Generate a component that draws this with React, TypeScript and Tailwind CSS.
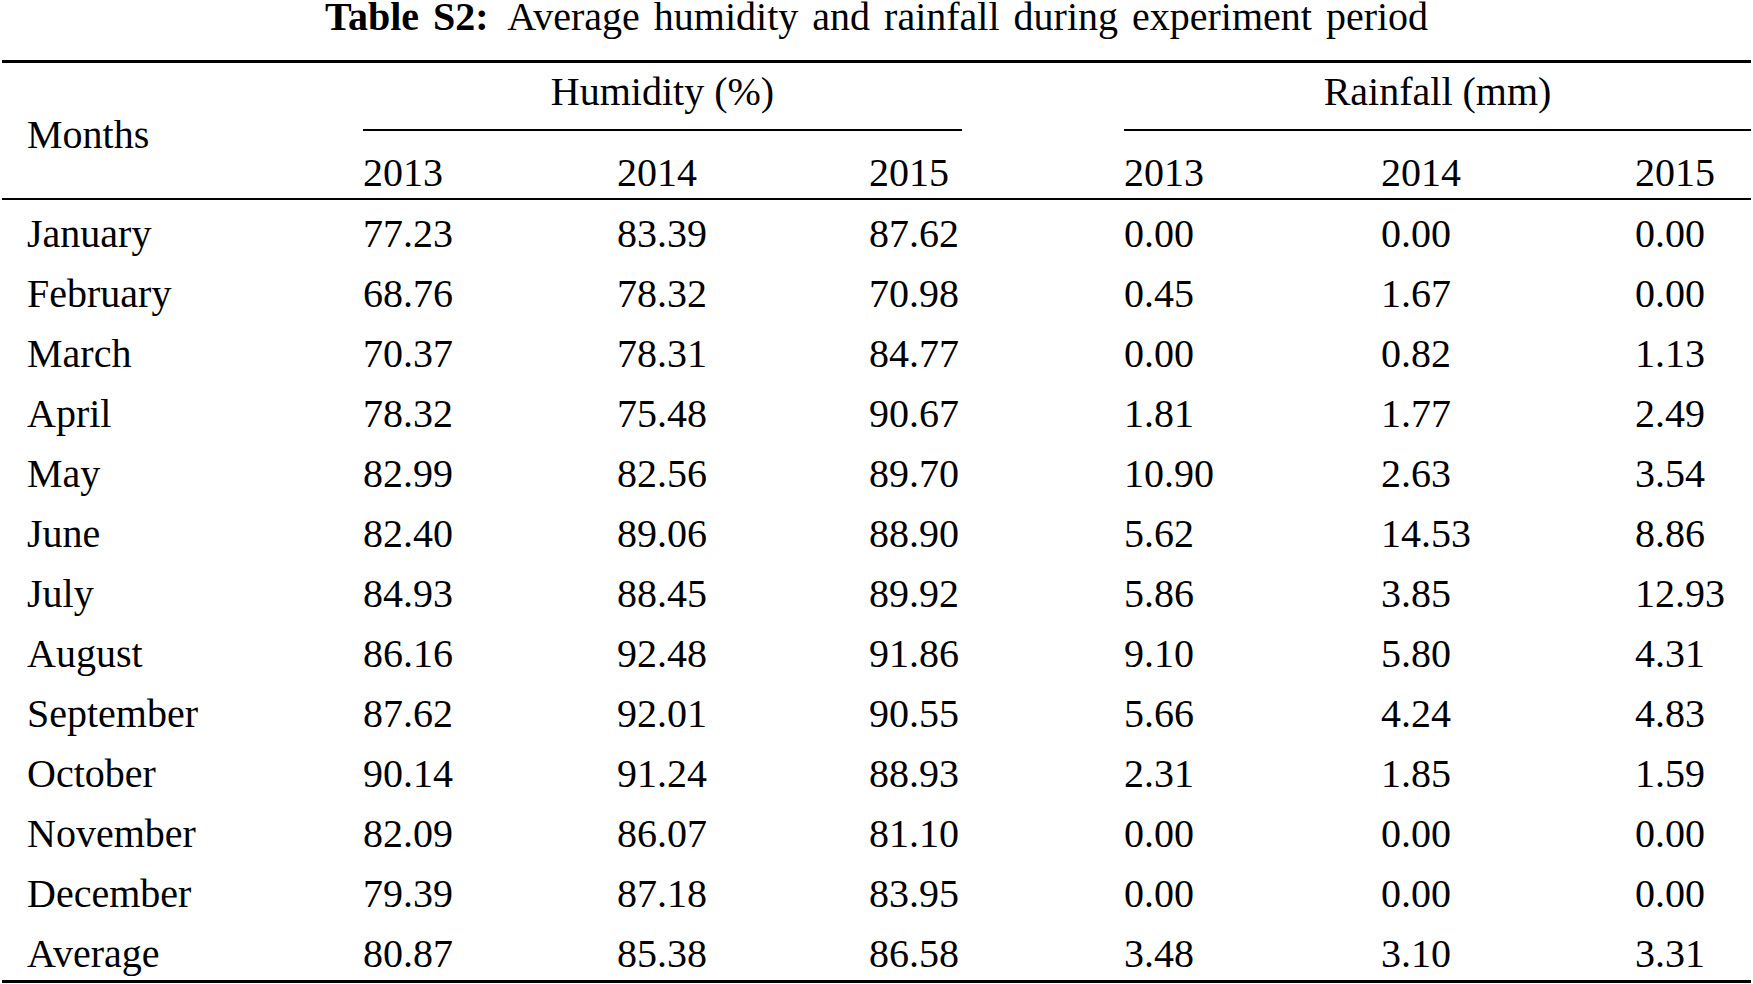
import React from "react";

type Row = {
  month: string;
  humidity: [string, string, string];
  rainfall: [string, string, string];
};

const rows: Row[] = [
  { month: "January", humidity: ["77.23", "83.39", "87.62"], rainfall: ["0.00", "0.00", "0.00"] },
  { month: "February", humidity: ["68.76", "78.32", "70.98"], rainfall: ["0.45", "1.67", "0.00"] },
  { month: "March", humidity: ["70.37", "78.31", "84.77"], rainfall: ["0.00", "0.82", "1.13"] },
  { month: "April", humidity: ["78.32", "75.48", "90.67"], rainfall: ["1.81", "1.77", "2.49"] },
  { month: "May", humidity: ["82.99", "82.56", "89.70"], rainfall: ["10.90", "2.63", "3.54"] },
  { month: "June", humidity: ["82.40", "89.06", "88.90"], rainfall: ["5.62", "14.53", "8.86"] },
  { month: "July", humidity: ["84.93", "88.45", "89.92"], rainfall: ["5.86", "3.85", "12.93"] },
  { month: "August", humidity: ["86.16", "92.48", "91.86"], rainfall: ["9.10", "5.80", "4.31"] },
  { month: "September", humidity: ["87.62", "92.01", "90.55"], rainfall: ["5.66", "4.24", "4.83"] },
  { month: "October", humidity: ["90.14", "91.24", "88.93"], rainfall: ["2.31", "1.85", "1.59"] },
  { month: "November", humidity: ["82.09", "86.07", "81.10"], rainfall: ["0.00", "0.00", "0.00"] },
  { month: "December", humidity: ["79.39", "87.18", "83.95"], rainfall: ["0.00", "0.00", "0.00"] },
  { month: "Average", humidity: ["80.87", "85.38", "86.58"], rainfall: ["3.48", "3.10", "3.31"] },
];

const years = ["2013", "2014", "2015"];

// shared column template so header and body line up
const cols = "grid grid-cols-[361px_254px_252px_255px_257px_254px_1fr]";

export default function App() {
  return (
    <div className="w-[1753px] h-[984px] bg-white text-black text-[40px] font-['Liberation_Serif','Times_New_Roman',serif]">
      {/* Caption */}
      <div className="h-[60px] leading-[34px] text-center whitespace-nowrap [word-spacing:4px]">
        <span className="font-bold">Table S2:</span>
        <span className="ml-[7px]"> Average humidity and rainfall during experiment period</span>
      </div>

      <div className="px-[2px]">
        {/* Header */}
        <div className={`${cols} border-t-[3px] border-b-2 border-black`}>
          <div className="row-span-2 pl-[25px] pt-[52px] leading-[40px]">Months</div>
          <div className="col-span-3">
            <div className="w-[599px] text-center pt-[9px] pb-[17px] leading-[40px] border-b-2 border-black">
              Humidity (%)
            </div>
          </div>
          <div className="col-span-3 text-center pt-[9px] pb-[17px] leading-[40px] border-b-2 border-black">
            Rainfall (mm)
          </div>
          {[...years, ...years].map((y, i) => (
            <div key={i} className="pt-[22px] pb-[5px] leading-[40px]">
              {y}
            </div>
          ))}
        </div>

        {/* Body */}
        <div className="pt-[8px] flex flex-col gap-y-[8px] border-b-[3px] border-black">
          {rows.map((r) => (
            <div key={r.month} className={`${cols} leading-[52px]`}>
              <div className="pl-[25px]">{r.month}</div>
              {r.humidity.map((v, i) => (
                <div key={`h${i}`}>{v}</div>
              ))}
              {r.rainfall.map((v, i) => (
                <div key={`r${i}`}>{v}</div>
              ))}
            </div>
          ))}
        </div>
      </div>
    </div>
  );
}
